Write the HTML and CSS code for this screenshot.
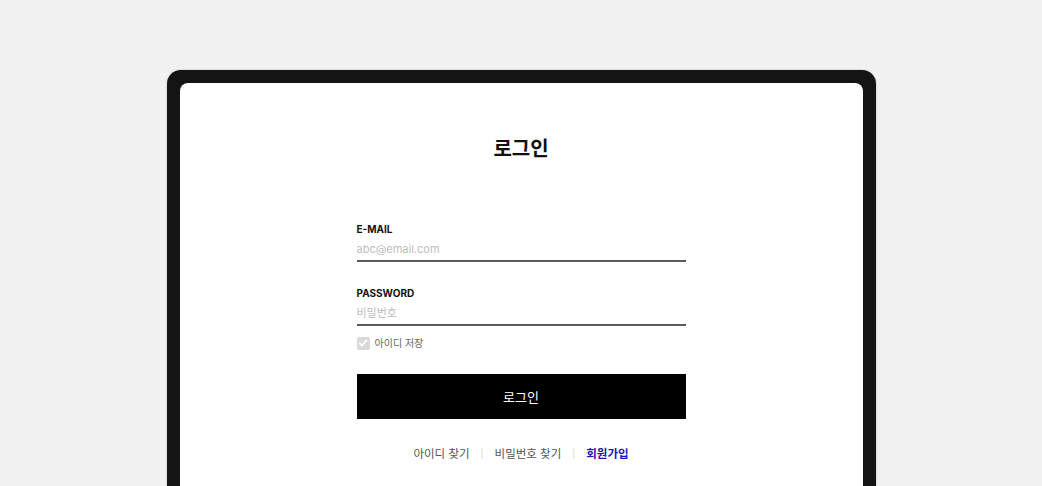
FILE: index.html
```html
<!DOCTYPE html>
<html lang="ko">

<head>
    <meta charset="UTF-8">
    <meta name="viewport" content="width=device-width, initial-scale=1.0">
    <title>로그인</title>

    <link rel="stylesheet" href="styles.css">
</head>

<body>
    <div class="stage">
        <div class="device">
            <div class="screen">
                <h1 class="title">로그인</h1>

                <form class="login-form">
                    <div class="field">
                        <label for="email">E-MAIL</label>
                        <input id="email" type="text" placeholder="abc@email.com">
                    </div>

                    <div class="field field-pw">
                        <label for="pw">PASSWORD</label>
                        <input id="pw" type="password" placeholder="비밀번호">
                    </div>

                    <div class="remember">
                        <span class="check">
                            <svg width="10" height="10" viewBox="0 0 10 10">
                                <path d="M1.5 5.2 L4 7.6 L8.6 2.4" fill="none" stroke="#fff" stroke-width="1.6" stroke-linecap="round" stroke-linejoin="round"/>
                            </svg>
                        </span>
                        <span class="remember-text">아이디 저장</span>
                    </div>

                    <button type="button" class="login-btn">로그인</button>

                    <div class="links">
                        <a href="#">아이디 찾기</a>
                        <span class="sep">|</span>
                        <a href="#">비밀번호 찾기</a>
                        <span class="sep">|</span>
                        <a href="#" class="join">회원가입</a>
                    </div>
                </form>
            </div>
        </div>
    </div>
</body>
</html>
```

FILE: styles.css
```css
body {
    margin: 0;
    height: 486px;
    overflow: hidden;
    background-color: #f1f1f1;
    font-family: Inter, "Noto Sans CJK KR", sans-serif;
}

.stage {
    display: flex;
    justify-content: center;
    padding-top: 70px;
}

.device {
    width: 683px;
    height: 403px;
    padding: 13px 13px 0;
    background-color: #141414;
    border-radius: 14px 14px 0 0;
    box-shadow: 0 0 2px rgba(0, 0, 0, 0.25);
}

.screen {
    height: 100%;
    background-color: #fff;
    border-radius: 8px 8px 0 0;
    padding-top: 52px;
    box-sizing: border-box;
}

.title {
    margin: 0;
    text-align: center;
    font-size: 20px;
    line-height: 28px;
    font-weight: 700;
    color: #111;
}

.login-form {
    width: 329px;
    margin: 59px auto 0;
}

.field {
    display: flex;
    flex-direction: column;
}

.field-pw {
    margin-top: 24px;
}

.field label {
    font-size: 10px;
    line-height: 14px;
    font-weight: 700;
    color: #111;
    margin-bottom: 2px;
}

.field input {
    height: 22px;
    padding: 0;
    border: none;
    border-bottom: 2px solid #5a5a5a;
    font-family: inherit;
    font-size: 11px;
    color: #333;
    outline: none;
}

.field input::placeholder {
    color: #bdbdbd;
}

.remember {
    display: flex;
    align-items: center;
    gap: 5px;
    margin-top: 10px;
}

.check {
    width: 13px;
    height: 13px;
    border-radius: 2px;
    background-color: #d9d9d9;
    display: flex;
    align-items: center;
    justify-content: center;
}

.remember-text {
    font-size: 10px;
    line-height: 14px;
    color: #666;
}

.login-btn {
    display: block;
    width: 100%;
    height: 45px;
    margin-top: 24px;
    border: none;
    background-color: #000;
    color: #fff;
    font-family: inherit;
    font-size: 13px;
    cursor: pointer;
}

.links {
    display: flex;
    justify-content: center;
    align-items: center;
    gap: 11px;
    margin-top: 26px;
    font-size: 11.5px;
    line-height: 18px;
}

.links a {
    color: #555;
    text-decoration: none;
}

.links .sep {
    color: #d4d4d4;
    font-size: 9px;
}

.links .join {
    color: #2316b8;
    font-weight: 700;
}
```
